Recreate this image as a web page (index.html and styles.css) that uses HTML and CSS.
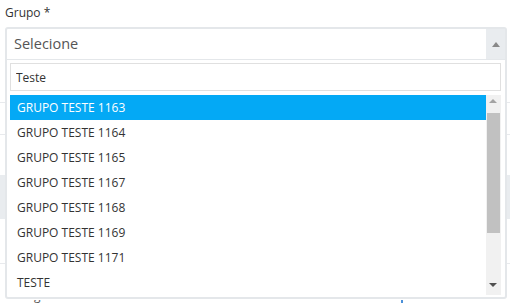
FILE: index.html
```html
<!DOCTYPE html>
<html lang="en">
<head>
    <meta charset="UTF-8">
    <title>Grupo</title>
    <link rel="stylesheet" href="styles.css">
</head>
<body>
    <div class="page">
        <div class="field">
            <label class="field-label">Grupo *</label>
            <div class="field-slot"></div>
        </div>
        <div class="bg-row line"></div>
        <div class="bg-row line-2"></div>
        <div class="bg-row gray-block"></div>
        <div class="bg-row line-3"></div>
        <div class="bg-row bottom-row">
            <span class="bg-g">g</span>
            <span class="bg-dot"></span>
        </div>

        <div class="select-open">
            <div class="select-head">
                <span class="select-text">Selecione</span>
                <span class="select-arrow"><span class="tri-up"></span></span>
            </div>
            <div class="dropdown">
                <input class="search" type="text" value="Teste">
                <div class="list-wrap">
                    <ul class="options">
                        <li class="active">GRUPO TESTE 1163</li>
                        <li>GRUPO TESTE 1164</li>
                        <li>GRUPO TESTE 1165</li>
                        <li>GRUPO TESTE 1167</li>
                        <li>GRUPO TESTE 1168</li>
                        <li>GRUPO TESTE 1169</li>
                        <li>GRUPO TESTE 1171</li>
                        <li>TESTE</li>
                    </ul>
                    <div class="scrollbar">
                        <span class="sb-up"></span>
                        <span class="sb-thumb"></span>
                        <span class="sb-down"></span>
                    </div>
                </div>
            </div>
        </div>
    </div>
</body>
</html>
```

FILE: styles.css
```css
body {
    margin: 0;
    font-family: "Open Sans", Arial, sans-serif;
    background-color: #fff;
    color: #333;
}
.page {
    position: relative;
    width: 510px;
    height: 305px;
    overflow: hidden;
}
.field {
    padding: 4px 5px 0;
}
.field-label {
    display: block;
    font-size: 12px;
    line-height: 17px;
    color: #333;
}
.field-slot {
    height: 32px;
}

/* form behind the open dropdown */
.bg-row {
    position: absolute;
    left: 0;
    right: 0;
}
.line {
    top: 102px;
    border-top: 1px solid #e8eaed;
}
.line-2 {
    top: 134px;
    border-top: 1px solid #e8eaed;
}
.gray-block {
    top: 175px;
    height: 44px;
    background-color: #e9ecef;
}
.line-3 {
    top: 263px;
    border-top: 1px solid #e8eaed;
}
.bottom-row {
    top: 300px;
    height: 5px;
    overflow: hidden;
}
.bg-g {
    position: absolute;
    left: 34px;
    top: -13px;
    font-size: 12px;
    line-height: 17px;
    color: #555;
}
.bg-dot {
    position: absolute;
    left: 401px;
    top: 0;
    width: 2px;
    height: 3px;
    background-color: #4a90d9;
}

/* open select */
.select-open {
    position: absolute;
    left: 5px;
    top: 27px;
    width: 498px;
    border: 2px solid #e4e7ea;
    border-radius: 3px;
    background-color: #fff;
}
.select-head {
    display: flex;
    height: 30px;
    border-bottom: 1px solid #e4e7ea;
}
.select-text {
    flex: 1;
    padding-left: 7px;
    font-size: 14.5px;
    line-height: 30px;
    color: #555;
}
.select-arrow {
    width: 19px;
    background-color: #e9ecef;
    display: flex;
    align-items: center;
    justify-content: center;
}
.tri-up {
    width: 0;
    height: 0;
    border-left: 4px solid transparent;
    border-right: 4px solid transparent;
    border-bottom: 5px solid #888;
}
.dropdown {
    padding: 3px 4px 2px 3px;
}
.search {
    display: block;
    box-sizing: border-box;
    width: 100%;
    height: 28px;
    margin: 0 0 4px;
    padding: 0 5px;
    border: 1px solid #e0e0e0;
    font-family: "Open Sans", Arial, sans-serif;
    font-size: 12px;
    color: #333;
    outline: none;
}
.list-wrap {
    display: flex;
    height: 200px;
}
.options {
    flex: 1;
    list-style: none;
    margin: 0;
    padding: 0;
}
.options li {
    height: 25px;
    line-height: 25px;
    padding-left: 7px;
    font-size: 12px;
    color: #333;
}
.options li.active {
    background-color: #04a9f5;
    color: #fff;
}
.scrollbar {
    position: relative;
    width: 15px;
    background-color: #f1f1f1;
}
.sb-up {
    position: absolute;
    left: 3px;
    top: 4px;
    border-left: 4px solid transparent;
    border-right: 4px solid transparent;
    border-bottom: 4px solid #a3a3a3;
}
.sb-thumb {
    position: absolute;
    left: 1px;
    right: 1px;
    top: 18px;
    height: 120px;
    background-color: #c1c1c1;
}
.sb-down {
    position: absolute;
    left: 3px;
    bottom: 8px;
    border-left: 4px solid transparent;
    border-right: 4px solid transparent;
    border-top: 4px solid #505050;
}
```
